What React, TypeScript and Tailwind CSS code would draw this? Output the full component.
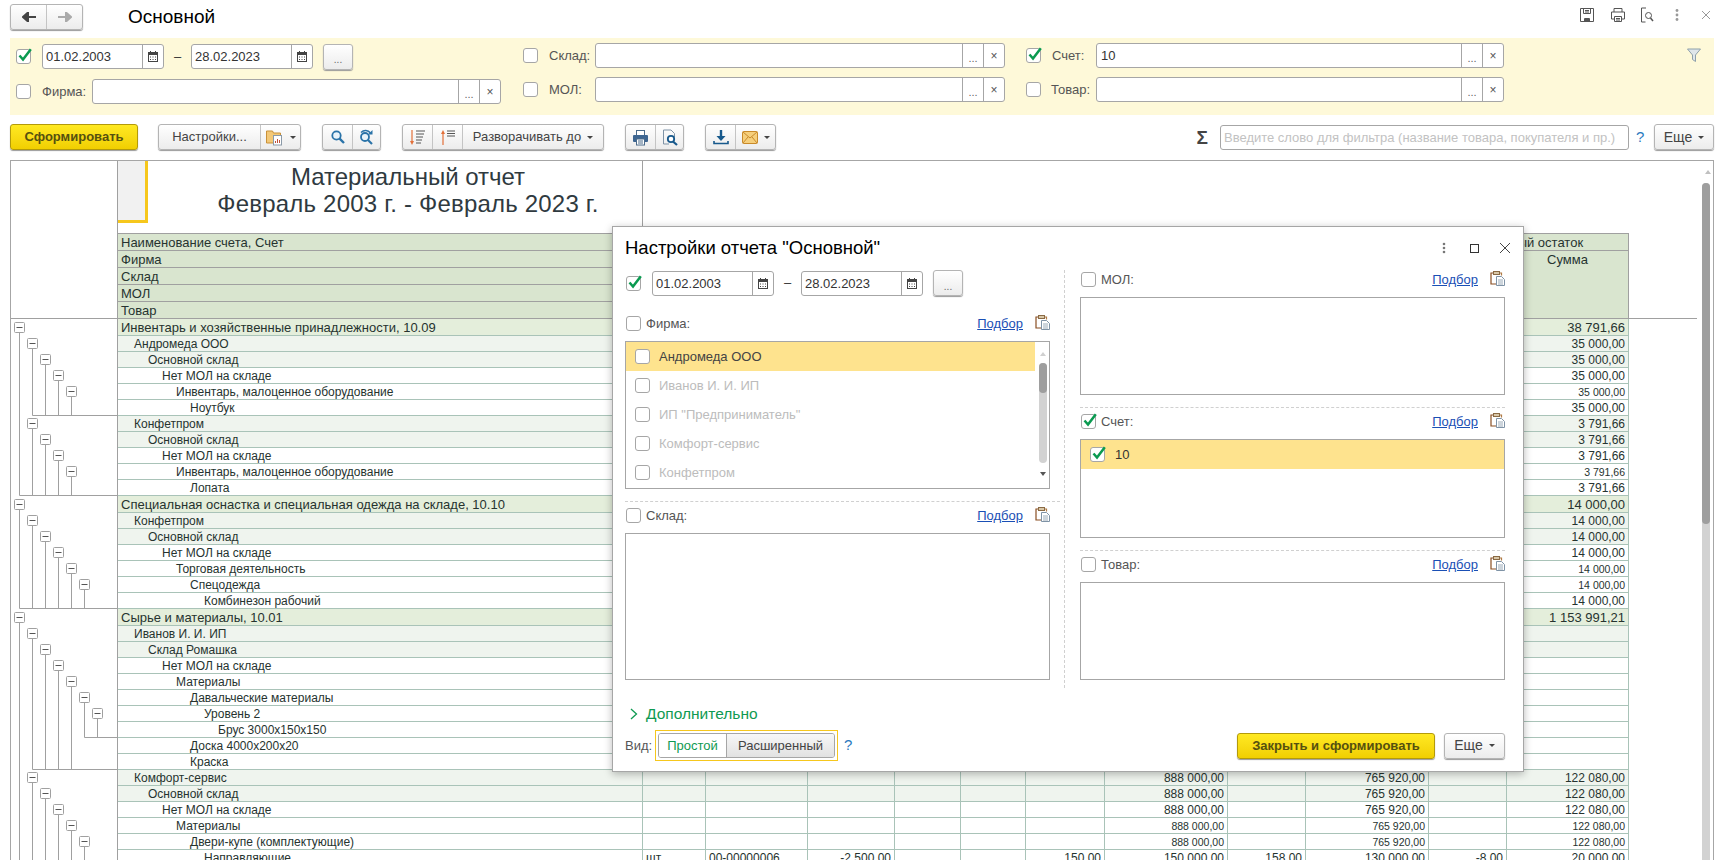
import type { ReactNode } from "react";

interface Row {
  label: string;
  level: number;
  last?: string;
  small?: boolean;
  cells?: string[];
}

const ROW_COLS =
  "grid grid-cols-[525px_63px_102px_87px_66px_65px_79px_123px_78px_123px_78px_122px]";

const ROWS: Row[] = [
  { label: "Инвентарь и хозяйственные принадлежности, 10.09", level: 0, last: "38 791,66" },
  { label: "Андромеда ООО", level: 1, last: "35 000,00" },
  { label: "Основной склад", level: 2, last: "35 000,00" },
  { label: "Нет МОЛ на складе", level: 3, last: "35 000,00" },
  { label: "Инвентарь, малоценное оборудование", level: 4, last: "35 000,00", small: true },
  { label: "Ноутбук", level: 5, last: "35 000,00" },
  { label: "Конфетпром", level: 1, last: "3 791,66" },
  { label: "Основной склад", level: 2, last: "3 791,66" },
  { label: "Нет МОЛ на складе", level: 3, last: "3 791,66" },
  { label: "Инвентарь, малоценное оборудование", level: 4, last: "3 791,66", small: true },
  { label: "Лопата", level: 5, last: "3 791,66" },
  { label: "Специальная оснастка и специальная одежда на складе, 10.10", level: 0, last: "14 000,00" },
  { label: "Конфетпром", level: 1, last: "14 000,00" },
  { label: "Основной склад", level: 2, last: "14 000,00" },
  { label: "Нет МОЛ на складе", level: 3, last: "14 000,00" },
  { label: "Торговая деятельность", level: 4, last: "14 000,00", small: true },
  { label: "Спецодежда", level: 5, last: "14 000,00", small: true },
  { label: "Комбинезон рабочий", level: 6, last: "14 000,00" },
  { label: "Сырье и материалы, 10.01", level: 0, last: "1 153 991,21" },
  { label: "Иванов И. И. ИП", level: 1 },
  { label: "Склад Ромашка", level: 2 },
  { label: "Нет МОЛ на складе", level: 3 },
  { label: "Материалы", level: 4 },
  { label: "Давальческие материалы", level: 5 },
  { label: "Уровень 2", level: 6 },
  { label: "Брус 3000х150х150", level: 7 },
  { label: "Доска 4000х200х20", level: 5 },
  { label: "Краска", level: 5 },
  { label: "Комфорт-сервис", level: 1, cells: ["", "", "", "", "", "", "888 000,00", "", "765 920,00", "", "122 080,00"] },
  { label: "Основной склад", level: 2, cells: ["", "", "", "", "", "", "888 000,00", "", "765 920,00", "", "122 080,00"] },
  { label: "Нет МОЛ на складе", level: 3, cells: ["", "", "", "", "", "", "888 000,00", "", "765 920,00", "", "122 080,00"] },
  { label: "Материалы", level: 4, small: true, cells: ["", "", "", "", "", "", "888 000,00", "", "765 920,00", "", "122 080,00"] },
  { label: "Двери-купе (комплектующие)", level: 5, small: true, cells: ["", "", "", "", "", "", "888 000,00", "", "765 920,00", "", "122 080,00"] },
  { label: "Направляющие", level: 6, cells: ["шт", "00-00000006", "-2 500,00", "", "", "150,00", "150 000,00", "158,00", "130 000,00", "-8,00", "20 000,00"] },
];

const rowHeight = (r: Row) => (r.level === 0 ? 17 : 16);

// Outline column: a +/- box per parent row, lines down to the end of its group
function TreeOutline() {
  const tops: number[] = [];
  let y = 0;
  ROWS.forEach((r) => {
    tops.push(y);
    y += rowHeight(r);
  });
  const lines: ReactNode[] = [];
  const boxes: ReactNode[] = [];
  ROWS.forEach((r, i) => {
    if (!ROWS[i + 1] || ROWS[i + 1].level <= r.level) return;
    let j = i + 1;
    while (ROWS[j] && ROWS[j].level > r.level) j++;
    const end = (ROWS[j] ? tops[j] : y) - 0.5;
    const x = 8.5 + r.level * 13;
    const cy = Math.round(tops[i] + rowHeight(r) / 2) - 0.5;
    lines.push(<path key={i} d={`M${x} ${cy}V${end}H106`} stroke="#a0a0a0" fill="none" />);
    boxes.push(
      <g key={i}>
        <rect x={x - 5} y={cy - 5} width={10} height={10} fill="#fff" stroke="#a0a0a0" rx={1} />
        <path d={`M${x - 3} ${cy}H${x + 3}`} stroke="#555" />
      </g>,
    );
  });
  return (
    <svg width="106" height={y}>
      {lines}
      {boxes}
    </svg>
  );
}

function ReportRow({ row }: { row: Row }) {
  const cells = row.cells ?? ["", "", "", "", "", "", "", "", "", "", row.last ?? ""];
  const rowClass =
    row.level === 0
      ? "h-[17px] bg-[#e4eedb] text-[13px] leading-[18px]"
      : row.level < 3
        ? "h-[16px] bg-[#eff4ee] text-[12px] leading-[17px]"
        : "h-[16px] bg-white text-[12px] leading-[17px]";
  return (
    <div className={`${ROW_COLS} ${rowClass} w-[1511px] border-b border-[#a9c3b8] text-[#26332f]`}>
      <div
        className="overflow-hidden whitespace-nowrap border-r border-[#a9c3b8]"
        style={{ paddingLeft: row.level === 0 ? 3 : 2 + 14 * row.level }}
      >
        {row.label}
      </div>
      {cells.map((c, i) => (
        <div
          key={i}
          className={`overflow-hidden whitespace-nowrap border-r border-[#a9c3b8] ${
            i < 2 ? "pl-[3px] text-left" : "pr-[3px] text-right"
          } ${row.small ? "text-[10.5px]" : ""}`}
        >
          {c}
        </div>
      ))}
    </div>
  );
}

function Check({ on }: { on?: boolean }) {
  return (
    <span className="relative block h-[15px] w-[15px] shrink-0 rounded-[3px] border border-[#a6a6a6] bg-white">
      {on && (
        <svg width="16" height="15" className="absolute left-[0px] top-[-2px]">
          <path d="M2.5 7.5L6 11.5L13.8 1.2" stroke="#0a9a50" strokeWidth="2.5" fill="none" />
        </svg>
      )}
    </span>
  );
}

function CalendarIcon() {
  return (
    <svg width="10" height="11" viewBox="0 0 10 11">
      <path d="M2.5 0v2M7.5 0v2" stroke="#444" />
      <rect x="0.5" y="1.5" width="9" height="9" fill="#fff" stroke="#444" />
      <rect x="0.5" y="1.5" width="9" height="2.5" fill="#444" />
      <path d="M2 6h1M4.5 6h1M7 6h1M2 8.5h1M4.5 8.5h1M7 8.5h1" stroke="#444" />
    </svg>
  );
}

function DateField({ value, className }: { value: string; className: string }) {
  return (
    <div className={`flex h-[25px] w-[122px] rounded-[3px] border border-[#a6a6a6] bg-white ${className}`}>
      <span className="flex-1 pl-[3px] leading-[23px] text-[#333]">{value}</span>
      <span className="flex w-[21px] items-center justify-center border-l border-[#a6a6a6]">
        <CalendarIcon />
      </span>
    </div>
  );
}

function Field({ value, width }: { value?: string; width: string }) {
  return (
    <div className={`flex h-[25px] rounded-[3px] border border-[#a6a6a6] bg-white ${width}`}>
      <span className="flex-1 pl-[4px] leading-[23px] text-[#333]">{value}</span>
      <span className="flex w-[21px] items-end justify-center border-l border-[#a6a6a6] pb-[2px] text-[11px] leading-[14px] text-[#666]">
        ...
      </span>
      <span className="flex w-[21px] items-center justify-center border-l border-[#a6a6a6] text-[12px] text-[#555]">
        ×
      </span>
    </div>
  );
}

function Btn({ className, children }: { className: string; children: ReactNode }) {
  return (
    <div
      className={`flex h-[26px] items-center justify-center rounded-[3px] border border-[#b4b4b4] bg-linear-to-b from-white to-[#ececec] text-[#444] shadow-[0_1px_1px_#9a9a9a] ${className}`}
    >
      {children}
    </div>
  );
}

function Cell({ className, children }: { className: string; children: ReactNode }) {
  return (
    <div className={`flex h-full items-center justify-center border-r border-[#c4c4c4] last:border-r-0 ${className}`}>
      {children}
    </div>
  );
}

function Caret() {
  return <span className="ml-[6px] h-0 w-0 border-x-[3px] border-t-[3px] border-x-transparent border-t-[#444]" />;
}

function YellowBtn({ className, children }: { className: string; children: ReactNode }) {
  return (
    <div
      className={`flex h-[26px] items-center justify-center rounded-[3px] border border-[#b39a0a] bg-linear-to-b from-[#ffe921] to-[#f1cf00] font-bold text-[#55500f] shadow-[0_1px_1px_#9a9a9a] ${className}`}
    >
      {children}
    </div>
  );
}

function ClipboardIcon() {
  return (
    <svg width="15" height="15" viewBox="0 0 15 15" className="shrink-0">
      <path d="M3.5 2H1v11h5" stroke="#8a4f22" strokeWidth="1.2" fill="none" />
      <path d="M9 2h2.5v2.5" stroke="#b07a44" strokeWidth="1.2" fill="none" />
      <rect x="3.5" y="0.5" width="6" height="3" fill="#d8c7a8" stroke="#8a6a44" />
      <path d="M6.5 5.5h5l3 3v6h-8z" fill="#fff" stroke="#7f93a6" />
      <path d="M8 9h5M8 11h5M8 13h5" stroke="#9aaab8" />
    </svg>
  );
}

function ListHeader({ label, on }: { label: string; on?: boolean }) {
  return (
    <div className="flex h-[15px] items-center">
      <span className="ml-px">
        <Check on={on} />
      </span>
      <span className="ml-[5px] text-[#555]">{label}</span>
      <a className="ml-auto text-[#1a4fb5] underline">Подбор</a>
      <span className="-mt-[3px] ml-[12px]">
        <ClipboardIcon />
      </span>
    </div>
  );
}

function HRule() {
  return <div className="border-t border-dashed border-[#d0d0d0]" />;
}

const FIRMS = ["Андромеда ООО", "Иванов И. И. ИП", 'ИП "Предприниматель"', "Комфорт-сервис", "Конфетпром"];

function SearchIcon() {
  return (
    <svg width="16" height="16" viewBox="0 0 16 16">
      <circle cx="6.5" cy="6.5" r="4.2" fill="#e8f3fa" stroke="#2a73a8" strokeWidth="1.8" />
      <path d="M9.6 9.6L14 14" stroke="#2a73a8" strokeWidth="2.4" />
    </svg>
  );
}

function SearchNextIcon() {
  return (
    <svg width="17" height="16" viewBox="0 0 17 16">
      <circle cx="7" cy="8" r="4" fill="#e8f3fa" stroke="#2a73a8" strokeWidth="1.8" />
      <path d="M10 11L14 15" stroke="#2a73a8" strokeWidth="2.2" />
      <path d="M3 3.5C6 0.5 10 1 12.5 4" stroke="#2a73a8" strokeWidth="1.5" fill="none" />
      <path d="M14.5 1v4.5H10z" fill="#2a73a8" />
    </svg>
  );
}

function PrintIcon() {
  return (
    <svg width="17" height="17" viewBox="0 0 17 17">
      <rect x="4.5" y="1.5" width="8" height="5" fill="#fff" stroke="#4a6a8a" />
      <rect x="1" y="6" width="15" height="7" rx="1" fill="#3d6591" />
      <rect x="4.5" y="10" width="8" height="6" fill="#fff" stroke="#4a6a8a" />
      <path d="M6 12h5M6 14h5" stroke="#4a6a8a" />
    </svg>
  );
}

function PreviewIcon() {
  return (
    <svg width="16" height="17" viewBox="0 0 16 17">
      <path d="M1.5 1H9l3.5 3.5V8M1.5 1v14H7" stroke="#7f93a6" fill="none" />
      <circle cx="9" cy="10" r="3.2" fill="#fff" stroke="#17598c" strokeWidth="1.8" />
      <path d="M11 12.5L15 16" stroke="#17598c" strokeWidth="2.2" />
    </svg>
  );
}

export default function App() {
  return (
    <div className="relative h-[860px] w-[1732px] overflow-hidden bg-white font-['Liberation_Sans',Arial,sans-serif] text-[13px]">
      {/* title bar */}
      <div className="flex h-[38px] items-start pt-[4px]">
        <Btn className="ml-[10px] h-[24px] w-[73px]">
          <Cell className="w-[36px]">
            <svg width="14" height="10" viewBox="0 0 14 10">
              <path d="M14 5H5M6 0.5L1 5l5 4.5z" stroke="#444" strokeWidth="2" fill="#444" />
            </svg>
          </Cell>
          <Cell className="flex-1">
            <svg width="14" height="10" viewBox="0 0 14 10">
              <path d="M0 5h9M8 0.5L13 5 8 9.5z" stroke="#aaa" strokeWidth="2" fill="#aaa" />
            </svg>
          </Cell>
        </Btn>
        <div className="ml-[45px] mt-[1px] text-[19px] leading-[24px] text-black">Основной</div>
        <div className="ml-auto mr-[21px] mt-[3px] flex items-center gap-[15px] text-[#555]">
          <svg width="16" height="16" viewBox="0 0 16 16">
            <path d="M1.5 1.5h13v13h-13zM4.5 1.5v5h7v-5M5.5 14.5v-3h5v3" stroke="#555" fill="none" />
            <path d="M6 3.5h4M6 5h4" stroke="#555" />
            <rect x="6" y="12" width="4" height="3" fill="#555" />
          </svg>
          <svg width="16" height="16" viewBox="0 0 16 16">
            <path d="M4 5V1.5h8V5M4 12H1.5V5h13v7H12M4.5 9.5h7v5h-7zM6 11.5h4M6 13h4" stroke="#555" fill="none" />
          </svg>
          <svg width="15" height="16" viewBox="0 0 15 16" className="ml-[-1px]">
            <path d="M6 1H1.5v14h4" stroke="#555" fill="none" />
            <circle cx="8.5" cy="8.5" r="3" stroke="#555" fill="none" />
            <path d="M10.5 11L13 14" stroke="#555" strokeWidth="1.5" />
          </svg>
          <svg width="4" height="14" viewBox="0 0 4 14" className="ml-[5px]">
            <circle cx="2" cy="2.5" r="1.4" fill="#999" />
            <circle cx="2" cy="7" r="1.4" fill="#999" />
            <circle cx="2" cy="11.5" r="1.4" fill="#999" />
          </svg>
          <svg width="10" height="10" viewBox="0 0 10 10" className="ml-[7px]">
            <path d="M1 1l8 8M9 1L1 9" stroke="#999" />
          </svg>
        </div>
      </div>

      {/* filter panel */}
      <div className="ml-[10px] mr-[18px] flex h-[77px] bg-[#fef9d9] pl-[6px]">
        <div className="flex w-[485px] flex-col pt-[6px]">
          <div className="flex h-[25px] items-center">
            <Check on />
            <DateField value="01.02.2003" className="ml-[11px]" />
            <span className="ml-[10px] w-[17px] text-[#333]">–</span>
            <DateField value="28.02.2023" className="" />
            <Btn className="ml-[10px] w-[30px]">
              <span className="mt-[6px] text-[10px] text-[#666]">...</span>
            </Btn>
          </div>
          <div className="mt-[10px] flex h-[25px] items-center">
            <Check />
            <span className="ml-[11px] w-[50px] text-[#555]">Фирма:</span>
            <Field width="w-[409px]" />
          </div>
        </div>
        <div className="ml-[22px] flex w-[482px] flex-col pt-[5px]">
          <div className="flex h-[25px] items-center">
            <Check />
            <span className="ml-[11px] w-[46px] text-[#555]">Склад:</span>
            <Field width="w-[410px]" />
          </div>
          <div className="mt-[9px] flex h-[25px] items-center">
            <Check />
            <span className="ml-[11px] w-[46px] text-[#555]">МОЛ:</span>
            <Field width="w-[410px]" />
          </div>
        </div>
        <div className="ml-[21px] flex w-[478px] flex-col pt-[5px]">
          <div className="flex h-[25px] items-center">
            <Check on />
            <span className="ml-[11px] w-[44px] text-[#555]">Счет:</span>
            <Field width="w-[409px]" value="10" />
          </div>
          <div className="mt-[9px] flex h-[25px] items-center">
            <Check />
            <span className="ml-[10px] w-[45px] text-[#555]">Товар:</span>
            <Field width="w-[409px]" />
          </div>
        </div>
        <div className="ml-auto mr-[13px] pt-[10px]">
          <svg width="14" height="14" viewBox="0 0 14 14">
            <path d="M0.5 1h13L8.5 7v6.5l-3-2V7z" fill="#dfe6ea" stroke="#8ea0aa" />
          </svg>
        </div>
      </div>

      {/* toolbar */}
      <div className="ml-[10px] mr-[18px] mt-[9px] flex h-[26px] items-center">
        <YellowBtn className="w-[128px]">Сформировать</YellowBtn>
        <Btn className="ml-[20px] w-[143px]">
          <Cell className="w-[102px]">Настройки...</Cell>
          <Cell className="flex-1">
            <svg width="18" height="18" viewBox="0 0 18 18">
              <path d="M0.5 3h6l1 2h7v10H.5z" fill="#f3c877" stroke="#c9913a" />
              <rect x="7.5" y="7.5" width="8" height="9.5" fill="#fff" stroke="#8b9aa8" />
              <path d="M9.5 15v-2M11.5 15v-4M13.5 15v-3" stroke="#c0503a" />
            </svg>
            <Caret />
          </Cell>
        </Btn>
        <Btn className="ml-[21px] w-[59px]">
          <Cell className="w-[30px]">
            <SearchIcon />
          </Cell>
          <Cell className="flex-1">
            <SearchNextIcon />
          </Cell>
        </Btn>
        <Btn className="ml-[21px] w-[202px]">
          <Cell className="w-[30px]">
            <svg width="18" height="17" viewBox="0 0 18 17">
              <path d="M3 1v13" stroke="#e2703a" strokeWidth="1.2" />
              <path d="M1 12h4l-2 4z" fill="#e2703a" />
              <path d="M7 2h9M7 5h8M7 8h7M7 11h6M7 14h5" stroke="#555" />
            </svg>
          </Cell>
          <Cell className="w-[30px]">
            <svg width="18" height="17" viewBox="0 0 18 17">
              <path d="M4 4v12" stroke="#e2703a" strokeWidth="1.2" />
              <path d="M2 5h4L4 1z" fill="#e2703a" />
              <path d="M8 2h8M8 4.5h8M8 7h8" stroke="#555" />
            </svg>
          </Cell>
          <Cell className="flex-1">
            Разворачивать до
            <Caret />
          </Cell>
        </Btn>
        <Btn className="ml-[21px] w-[59px]">
          <Cell className="w-[30px]">
            <PrintIcon />
          </Cell>
          <Cell className="flex-1">
            <PreviewIcon />
          </Cell>
        </Btn>
        <Btn className="ml-[21px] w-[71px]">
          <Cell className="w-[30px]">
            <svg width="16" height="16" viewBox="0 0 16 16">
              <path d="M8 1v8" stroke="#17598c" strokeWidth="2.4" />
              <path d="M3.5 7h9L8 12z" fill="#17598c" />
              <path d="M1 12v2.5h14V12" stroke="#17598c" strokeWidth="1.6" fill="none" />
            </svg>
          </Cell>
          <Cell className="flex-1">
            <svg width="16" height="13" viewBox="0 0 16 13">
              <rect x="0.5" y="0.5" width="15" height="12" rx="1" fill="#f6cf7c" stroke="#c98a2a" />
              <path d="M1 1l7 6 7-6M1 12l5-6M15 12l-5-6" stroke="#c98a2a" fill="none" />
            </svg>
            <Caret />
          </Cell>
        </Btn>
        <div className="ml-auto flex items-center">
          <span className="mr-[12px] text-[19px] font-bold leading-none text-[#444]">Σ</span>
          <div className="h-[25px] w-[409px] rounded-[3px] border border-[#a6a6a6] pl-[3px] leading-[23px] text-[#c2c2c2]">
            Введите слово для фильтра (название товара, покупателя и пр.)
          </div>
          <span className="ml-[7px] w-[18px] text-[15px] text-[#2a7ac0]">?</span>
          <Btn className="w-[60px] text-[14px]">
            Еще
            <Caret />
          </Btn>
        </div>
      </div>

      {/* report */}
      <div className="ml-[10px] mr-[18px] mt-[10px] flex h-[701px] overflow-hidden border-x border-t border-[#a6a6a6]">
        <div className="w-[106px] shrink-0">
          <div className="h-[158px] border-b border-[#a0a0a0]" />
          <TreeOutline />
        </div>
        <div className="min-w-0 flex-1 border-l border-[#a0a0a0]">
          <div className="flex h-[72px] w-[525px] items-start border-r border-[#a0a0a0]">
            <div className="h-[62px] w-[30px] shrink-0 border-b-[3px] border-r-[3px] border-[#f6c71d] bg-[#f1f1f1]" />
            <div className="flex-1 pl-[26px] pt-[3px] text-center text-[24px] leading-[26.5px] text-[#2f3a3f]">
              Материальный отчет
              <br />
              <span className="tracking-[0.2px]">Февраль 2003 г. - Февраль 2023 г.</span>
            </div>
          </div>
          <div className="flex">
            <div className="flex h-[86px] w-[1511px] border-t border-[#a0a0a0] bg-[#d9e5cf] text-[13px] leading-[18px] text-[#26332f]">
              <div className="w-[525px] shrink-0 border-r border-[#a0a0a0]">
                {["Наименование счета, Счет", "Фирма", "Склад", "МОЛ", "Товар"].map((t) => (
                  <div key={t} className="h-[17px] border-b border-[#a0a0a0] pl-[3px]">
                    {t}
                  </div>
                ))}
              </div>
              <div className="ml-auto w-[200px] border-x border-[#a0a0a0]">
                <div className="h-[17px] border-b border-[#a0a0a0] text-center">Конечный остаток</div>
                <div className="flex h-[68px] border-b border-[#a0a0a0]">
                  <div className="w-[77px] border-r border-[#a0a0a0]" />
                  <div className="flex-1 text-center">Сумма</div>
                </div>
              </div>
            </div>
            <div className="h-[86px] w-[68px] border-b border-[#a0a0a0]" />
          </div>
          {ROWS.map((r, i) => (
            <ReportRow key={i} row={r} />
          ))}
        </div>
        <div className="relative w-[12px] shrink-0 pl-[1px]">
          <div className="mx-auto mt-[9px] h-0 w-0 border-x-[3px] border-b-[4px] border-x-transparent border-b-[#c0c0c0]" />
          <div className="ml-[0px] mt-[9px] h-[700px] w-[8px] rounded-[4px] bg-[#d2d2d2]">
            <div className="h-[341px] w-[8px] rounded-[4px] bg-[#9e9e9e]" />
          </div>
        </div>
      </div>

      {/* settings dialog */}
      <div className="absolute left-[612px] top-[226px] h-[546px] w-[912px] border border-[#a6a6a6] bg-white pl-[12px] pr-[18px] shadow-[0_2px_8px_rgba(0,0,0,0.28)]">
        <div className="flex h-[43px] items-start justify-between">
          <div className="mt-[10px] text-[18.5px] leading-[22px] text-black">Настройки отчета "Основной"</div>
          <div className="-mr-[5px] mt-[15px] flex items-center">
            <svg width="4" height="12" viewBox="0 0 4 12">
              <circle cx="2" cy="2" r="1.3" fill="#777" />
              <circle cx="2" cy="6" r="1.3" fill="#777" />
              <circle cx="2" cy="10" r="1.3" fill="#777" />
            </svg>
            <span className="ml-[24px] block h-[9px] w-[9px] border border-[#333]" />
            <svg width="10" height="10" viewBox="0 0 10 10" className="ml-[21px]">
              <path d="M0 0l10 10M10 0L0 10" stroke="#444" />
            </svg>
          </div>
        </div>

        <div className="flex h-[418px]">
          <div className="w-[425px]">
            <div className="flex h-[26px] items-center">
              <span className="ml-px">
                <Check on />
              </span>
              <DateField value="01.02.2003" className="ml-[11px]" />
              <span className="ml-[10px] w-[17px] text-[#333]">–</span>
              <DateField value="28.02.2023" className="" />
              <Btn className="ml-[10px] w-[30px]">
                <span className="mt-[6px] text-[10px] text-[#666]">...</span>
              </Btn>
            </div>
            <div className="mt-[20px]">
              <ListHeader label="Фирма:" />
            </div>
            <div className="mt-[10px] flex h-[148px] border border-[#a6a6a6]">
              <div className="flex-1">
                {FIRMS.map((f, i) => (
                  <div
                    key={f}
                    className={`flex h-[29px] items-center pl-[9px] ${
                      i === 0 ? "bg-[#fee38e] text-[#444]" : "text-[#bcbcbc]"
                    }`}
                  >
                    <Check />
                    <span className="ml-[9px]">{f}</span>
                  </div>
                ))}
              </div>
              <div className="flex w-[14px] flex-col items-center pl-[1px]">
                <div className="mt-[10px] h-0 w-0 border-x-[3px] border-b-[4px] border-x-transparent border-b-[#d0d0d0]" />
                <div className="mt-[7px] h-[100px] w-[8px] rounded-[4px] bg-[#d2d2d2]">
                  <div className="h-[30px] w-[8px] rounded-[4px] bg-[#9e9e9e]" />
                </div>
                <div className="mt-[9px] h-0 w-0 border-x-[3px] border-t-[4px] border-x-transparent border-t-[#555]" />
              </div>
            </div>
            <div className="mr-[-10px] mt-[12px]">
              <HRule />
            </div>
            <div className="mt-[6px]">
              <ListHeader label="Склад:" />
            </div>
            <div className="mt-[10px] h-[147px] border border-[#a6a6a6]" />
          </div>

          <div className="ml-[14px] mr-[15px] border-l border-dashed border-[#d0d0d0]" />

          <div className="w-[425px] pt-[2px]">
            <ListHeader label="МОЛ:" />
            <div className="mt-[10px] h-[98px] border border-[#a6a6a6]" />
            <div className="mt-[12px]">
              <HRule />
            </div>
            <div className="mt-[6px]">
              <ListHeader label="Счет:" on />
            </div>
            <div className="mt-[10px] h-[99px] border border-[#a6a6a6]">
              <div className="flex h-[29px] items-center bg-[#fee38e] pl-[9px] text-[#333]">
                <Check on />
                <span className="ml-[10px]">10</span>
              </div>
            </div>
            <div className="mt-[12px]">
              <HRule />
            </div>
            <div className="mt-[6px]">
              <ListHeader label="Товар:" />
            </div>
            <div className="mt-[10px] h-[98px] border border-[#a6a6a6]" />
          </div>
        </div>

        <div className="mt-[16px] flex h-[20px] items-center pl-[5px]">
          <svg width="8" height="12" viewBox="0 0 8 12">
            <path d="M1 1l5.5 5L1 11" stroke="#0f9a52" strokeWidth="1.3" fill="none" />
          </svg>
          <span className="ml-[8px] text-[15.5px] leading-[24px] text-[#0f9a52]">Дополнительно</span>
        </div>

        <div className="mt-[6px] flex h-[31px] items-center">
          <span className="w-[30px] text-[#555]">Вид:</span>
          <div className="flex h-[31px] w-[183px] items-center justify-center border border-[#f6c71d]">
            <div className="flex h-[25px] w-[177px] overflow-hidden rounded-[3px] border border-[#a6a6a6]">
              <div className="flex w-[68px] items-center justify-center border-r border-[#a6a6a6] bg-white text-[#0f9a52]">
                Простой
              </div>
              <div className="flex flex-1 items-center justify-center bg-linear-to-b from-[#f7f7f7] to-[#e2e2e2] text-[#444]">
                Расширенный
              </div>
            </div>
          </div>
          <span className="ml-[6px] text-[15px] text-[#2a7ac0]">?</span>
          <YellowBtn className="ml-auto w-[198px]">Закрыть и сформировать</YellowBtn>
          <Btn className="ml-[9px] w-[61px] text-[14px]">
            Еще
            <Caret />
          </Btn>
        </div>
      </div>
    </div>
  );
}
